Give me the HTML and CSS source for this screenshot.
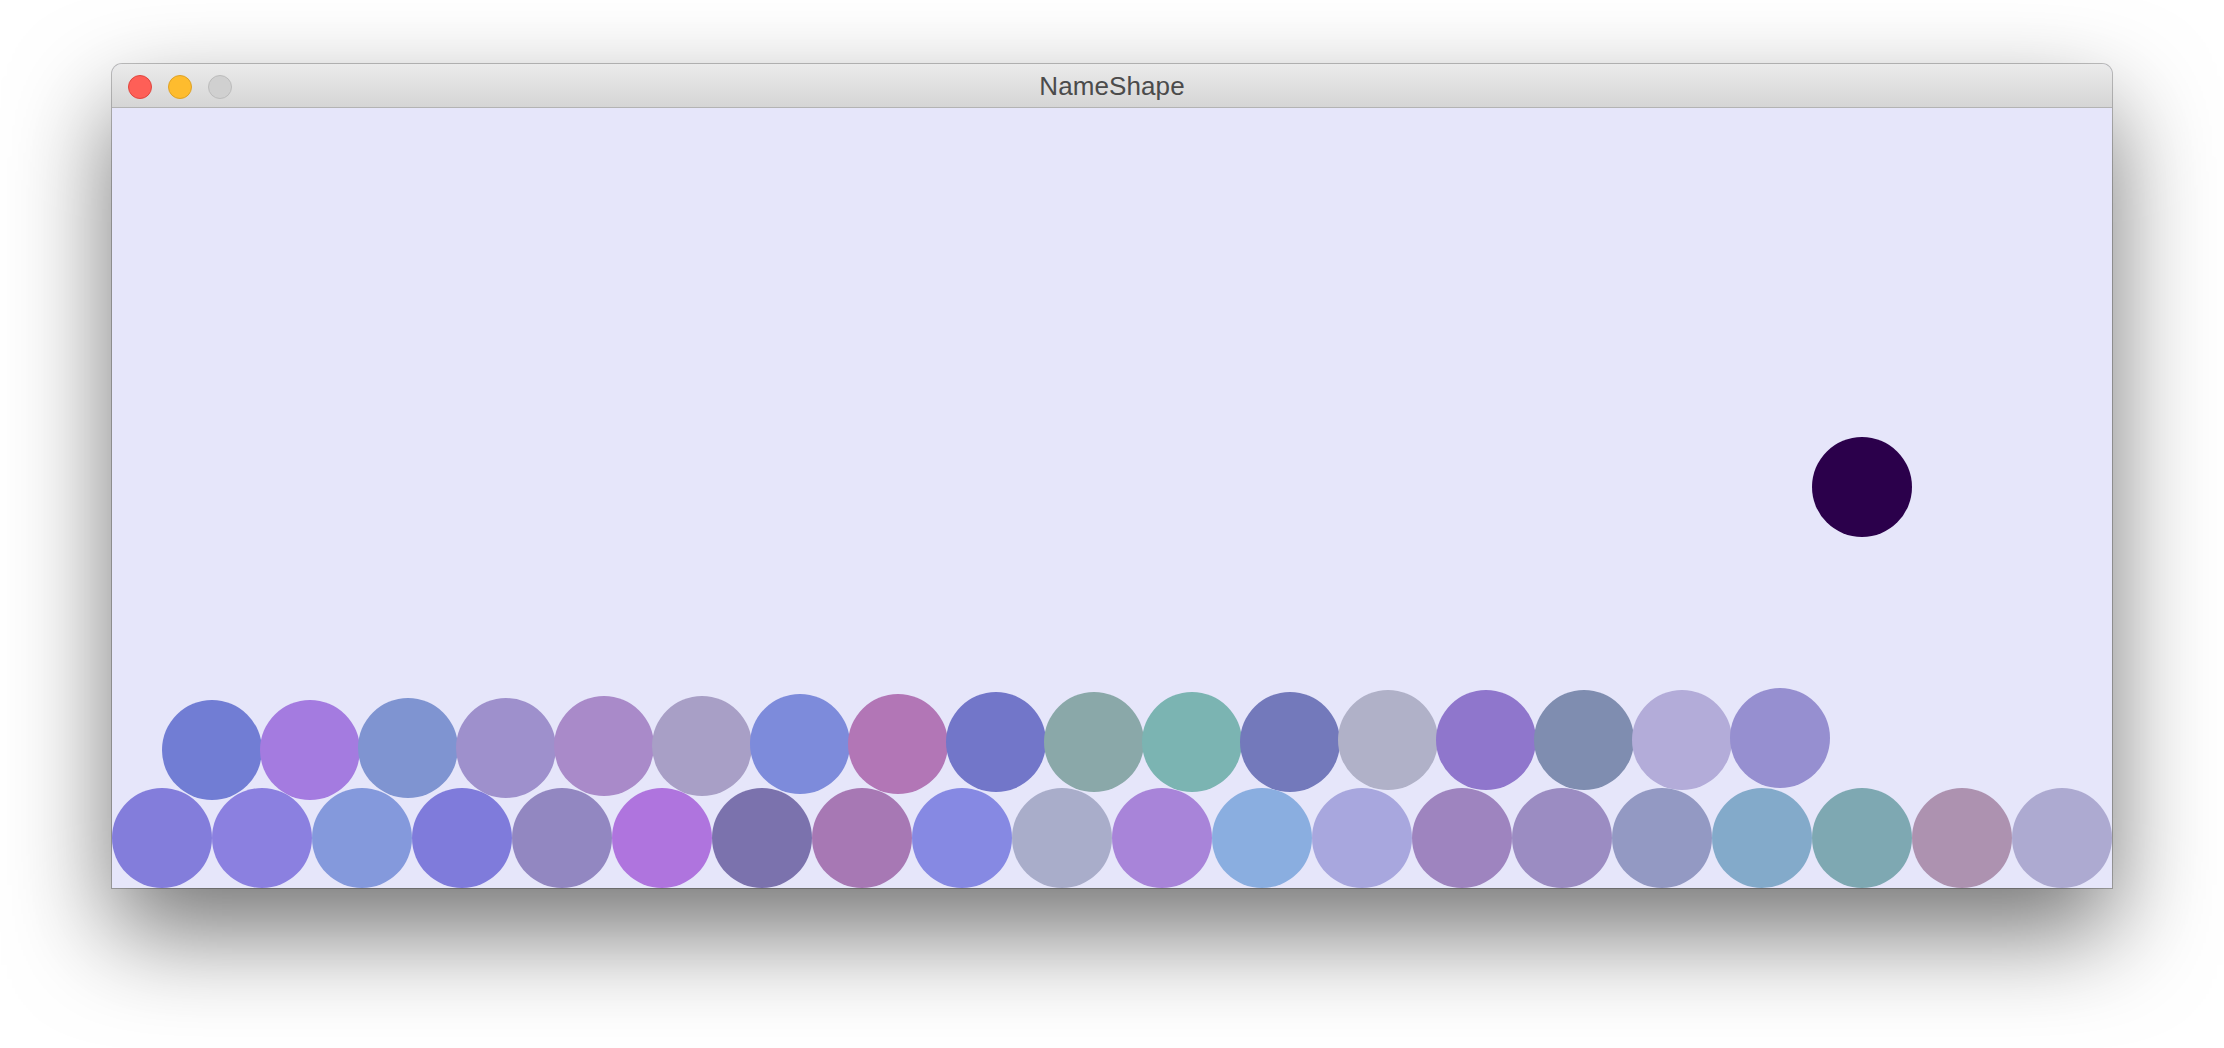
FILE: index.html
```html
<!DOCTYPE html>
<html lang="en">
<head>
<meta charset="utf-8">
<title>NameShape</title>
<link rel="stylesheet" href="styles.css">
</head>
<body>
<div class="window">
  <div class="titlebar">
    <div class="lights">
      <span class="light close"></span>
      <span class="light minimize"></span>
      <span class="light zoom"></span>
    </div>
    <div class="title">NameShape</div>
    <div class="spacer"></div>
  </div>
  <div class="canvas">
    <div class="ball active" style="--x:1700px;--y:329px"></div>

    <div class="ball" style="--x:49.5px;--y:591.5px;--c:#717dd4"></div>
    <div class="ball" style="--x:147.5px;--y:591.5px;--c:#a47be0"></div>
    <div class="ball" style="--x:245.5px;--y:590px;--c:#7f94d1"></div>
    <div class="ball" style="--x:343.5px;--y:589.5px;--c:#9e90cc"></div>
    <div class="ball" style="--x:441.5px;--y:588px;--c:#a98ac9"></div>
    <div class="ball" style="--x:539.5px;--y:588px;--c:#a89fc6"></div>
    <div class="ball" style="--x:637.5px;--y:586px;--c:#7d8bdb"></div>
    <div class="ball" style="--x:735.5px;--y:586px;--c:#b276b6"></div>
    <div class="ball" style="--x:833.5px;--y:584px;--c:#7276c9"></div>
    <div class="ball" style="--x:931.5px;--y:584px;--c:#8aa8a9"></div>
    <div class="ball" style="--x:1029.5px;--y:584px;--c:#7bb4b2"></div>
    <div class="ball" style="--x:1127.5px;--y:584px;--c:#7379bb"></div>
    <div class="ball" style="--x:1225.5px;--y:582px;--c:#b0b1c8"></div>
    <div class="ball" style="--x:1323.5px;--y:582px;--c:#8f76cc"></div>
    <div class="ball" style="--x:1421.5px;--y:582px;--c:#7f8db0"></div>
    <div class="ball" style="--x:1519.5px;--y:582px;--c:#b3acd9"></div>
    <div class="ball" style="--x:1617.5px;--y:580px;--c:#968fd0"></div>

    <div class="ball" style="--x:0px;--y:680px;--c:#837ddb"></div>
    <div class="ball" style="--x:100px;--y:680px;--c:#8b80e0"></div>
    <div class="ball" style="--x:200px;--y:680px;--c:#8499dc"></div>
    <div class="ball" style="--x:300px;--y:680px;--c:#7f7bdb"></div>
    <div class="ball" style="--x:400px;--y:680px;--c:#9287c1"></div>
    <div class="ball" style="--x:500px;--y:680px;--c:#af74de"></div>
    <div class="ball" style="--x:600px;--y:680px;--c:#7b72ad"></div>
    <div class="ball" style="--x:700px;--y:680px;--c:#a778b4"></div>
    <div class="ball" style="--x:800px;--y:680px;--c:#8689e3"></div>
    <div class="ball" style="--x:900px;--y:680px;--c:#a9adca"></div>
    <div class="ball" style="--x:1000px;--y:680px;--c:#a884d9"></div>
    <div class="ball" style="--x:1100px;--y:680px;--c:#8aaee0"></div>
    <div class="ball" style="--x:1200px;--y:680px;--c:#a8a7de"></div>
    <div class="ball" style="--x:1300px;--y:680px;--c:#9e84bf"></div>
    <div class="ball" style="--x:1400px;--y:680px;--c:#9b8cc2"></div>
    <div class="ball" style="--x:1500px;--y:680px;--c:#9399c3"></div>
    <div class="ball" style="--x:1600px;--y:680px;--c:#83aaca"></div>
    <div class="ball" style="--x:1700px;--y:680px;--c:#7ea8b2"></div>
    <div class="ball" style="--x:1800px;--y:680px;--c:#ad92b0"></div>
    <div class="ball" style="--x:1900px;--y:680px;--c:#adaad1"></div>
  </div>
</div>
</body>
</html>
```

FILE: styles.css
```css
html, body {
  margin: 0;
  padding: 0;
  background: #ffffff;
}

body {
  padding: 64px 0 0 112px;
  width: 2224px;
  height: 1048px;
  box-sizing: border-box;
  overflow: hidden;
  font-family: "Liberation Sans", Arial, sans-serif;
}

.window {
  width: 2000px;
  display: flex;
  flex-direction: column;
  border-radius: 10px 10px 0 0;
  box-shadow:
    0 0 0 1px rgba(0, 0, 0, 0.24),
    0 44px 100px rgba(0, 0, 0, 0.55);
  background: #e6e6fa;
}

.titlebar {
  height: 44px;
  box-sizing: border-box;
  display: grid;
  grid-template-columns: 1fr auto 1fr;
  align-items: center;
  background: linear-gradient(to bottom, #ebebeb 0%, #d5d5d5 100%);
  border-bottom: 1px solid #b3b3b3;
  border-radius: 10px 10px 0 0;
}

.lights {
  display: flex;
  gap: 16px;
  align-items: center;
  padding: 2px 0 0 16px;
}

.light {
  width: 24px;
  height: 24px;
  box-sizing: border-box;
  border-radius: 50%;
  display: block;
}

.light.close {
  background: #fe5f57;
  border: 1px solid #e0463f;
}

.light.minimize {
  background: #febc2e;
  border: 1px solid #dea226;
}

.light.zoom {
  background: #d0d0d0;
  border: 1px solid #bcbcbc;
}

.title {
  font-size: 26px;
  color: #4b4b4b;
  line-height: 44px;
  letter-spacing: 0.1px;
}

.canvas {
  position: relative;
  height: 780px;
  background: #e6e6fa;
  overflow: hidden;
}

.ball {
  position: absolute;
  left: var(--x);
  top: var(--y);
  width: 100px;
  height: 100px;
  border-radius: 50%;
  background: var(--c);
}

.ball.active {
  background: #2b004b;
}
```
